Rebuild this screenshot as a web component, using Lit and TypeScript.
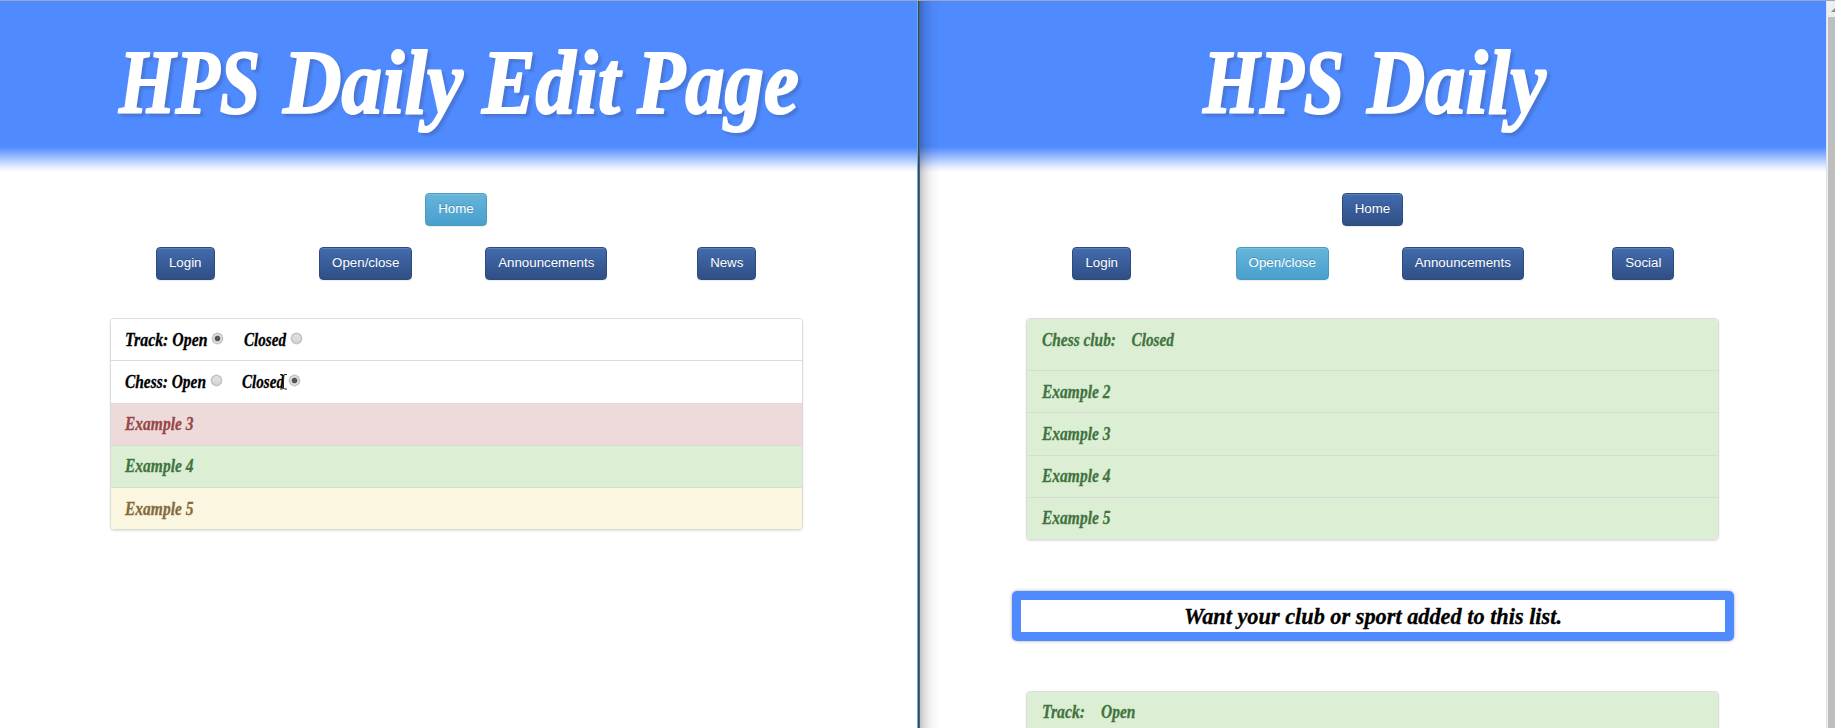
import { LitElement, html, svg, css } from "lit";
import { customElement, property } from "lit/decorators.js";

type Word = [text: string, x: number, width: number];

/** Display lettering: each word is fitted to its own measure. */
@customElement("script-text")
class ScriptText extends LitElement {
  @property({ attribute: false }) words: Word[] = [];
  @property({ type: Number }) size = 20;
  @property({ type: Number }) width = 0;
  @property({ type: Number }) height = 20;
  @property({ type: Number }) base = 15;
  @property({ type: Number }) weight = 0.3;
  static styles = css`
    :host { display: inline-block; vertical-align: top; line-height: 0; }
    svg { overflow: visible; display: block; }
    text { font-family: "Liberation Serif", "Times New Roman", serif; font-weight: 700; font-style: italic; fill: currentColor; stroke: currentColor; stroke-linejoin: round; }
  `;
  render() {
    return html`<svg width=${this.width} height=${this.height}>
      <text y=${this.base} font-size=${this.size} stroke-width=${this.weight}>${this.words.map(
        ([t, x, w]) => svg`<tspan x=${x} textLength=${w} lengthAdjust="spacingAndGlyphs">${t}</tspan>`
      )}</text></svg>`;
  }
}

const label = (words: Word[]) => html`<script-text .words=${words} width="200" height="20" base="14.6" size="18.5"></script-text>`;

interface Row { words: Word[]; tone: string; tall?: boolean; radios?: [boolean, boolean]; second?: Word[]; shift?: boolean; }
const example = (n: number): Word[] => [[`Example ${n}`, 0, 68.5]];

@customElement("site-header")
class SiteHeader extends LitElement {
  @property({ attribute: false }) words: Word[] = [];
  @property({ type: Number }) width = 0;
  static styles = css`
    :host { display: flex; justify-content: center; height: 171px; box-sizing: border-box; padding-top: 33px; color: #fff;
      background: linear-gradient(#4f8aff 0 145px, #6093ff 148px, #84adff 153px, #b0caff 159px, #dfe9ff 165px, #fff 171px); }
    script-text { filter: drop-shadow(3px 3px 1px rgba(60, 80, 130, .32)); }
  `;
  render() {
    return html`<script-text .words=${this.words} width=${this.width} height="100" base="78.5" size="90" weight="2"></script-text>`;
  }
}

@customElement("site-nav")
class SiteNav extends LitElement {
  @property({ attribute: false }) items: string[] = [];
  @property() active = "";
  static styles = css`
    :host { display: block; padding: 20.5px 0 0 95px; }
    .home { display: flex; justify-content: center; margin-bottom: 21px; width: 722px; }
    .links { display: grid; grid-template-columns: repeat(4, 180.5px); justify-items: center; width: 722px; }
    button { height: 33px; box-sizing: border-box; padding: 0 12px; border: 1px solid #2f4b7c; border-radius: 4px;
      font: 13.3px/20px "Liberation Sans", Arial, sans-serif; color: #fff; text-shadow: 0 -1px 0 rgba(0,0,0,.2);
      background: linear-gradient(#426bae, #304f84); box-shadow: inset 0 1px 0 rgba(255,255,255,.15), 0 1px 1px rgba(0,0,0,.075); }
    .on { border-color: #489abf; background: linear-gradient(#66b5da, #489fce); }
  `;
  btn(t: string) { return html`<button class=${t === this.active ? "on" : ""}>${t}</button>`; }
  render() {
    return html`<div class="home">${this.btn("Home")}</div><div class="links">${this.items.map((t) => this.btn(t))}</div>`;
  }
}

@customElement("club-list")
class ClubList extends LitElement {
  @property({ attribute: false }) rows: Row[] = [];
  static styles = css`
    :host { display: block; width: 693px; box-sizing: border-box; border: 1px solid #dcdcdc; border-radius: 4px; box-shadow: 0 1px 2px rgba(0,0,0,.12); overflow: hidden; }
    .row { display: flex; height: 42.3px; box-sizing: border-box; padding: 11.5px 14.5px 0; border-bottom: 1px solid #d9dbd7; color: #000; background: #fff; }
    .row:last-child { border-bottom: 0; height: 41px; }
    .row.tall { height: 52px; }
    .red { background: #eedada; color: #964747; }
    .green { background: #dcefd4; color: #42733f; }
    .yellow { background: #faf6df; color: #846a3d; }
    .slot { display: flex; width: 118.5px; }
    .slot.b { width: 117px; }
    .group { display: flex; }
    .radio { width: 11px; height: 11px; box-sizing: border-box; margin-top: 2px; border-radius: 50%; border: 1px solid #b3b3b3; background: linear-gradient(#e2e2e2, #d5d5d5); box-shadow: 0 0 0 .4px #c8c8c8; }
    .radio.on { background: radial-gradient(circle, #555 0 2.4px, #e3e3e3 3.3px); }
  `;
  radio(on: boolean) { return html`<span class="radio ${on ? "on" : ""}" role="radio" aria-checked=${on}></span>`; }
  render() {
    return this.rows.map((r) => html`<div class="row ${r.tone} ${r.tall ? "tall" : ""}">${r.radios
      ? html`<div class="slot ${r.shift ? "b" : ""}"><script-text .words=${r.words} width=${r.shift ? 86 : 87} base="14.6" size="18.5"></script-text>${this.radio(r.radios[0])}</div>
        <div class="group"><script-text .words=${r.second!} width="47" base="14.6" size="18.5"></script-text>${this.radio(r.radios[1])}</div>`
      : label(r.words)}</div>`);
  }
}

@customElement("app-root")
class AppRoot extends LitElement {
  static styles = css`
    :host { display: flex; position: relative; width: 1835px; height: 728px; box-sizing: border-box; overflow: hidden; background: #fff; border-top: 1px solid #9ba5bd; }
    .pane { height: 727px; overflow: hidden; position: relative; }
    .left { width: 917px; }
    .edge { width: 3px; height: 727px; flex: none; background: linear-gradient(90deg, #62b0dc 0 1px, #29466c 1px 2px, #56626f 2px 3px); }
    .right { width: 906px; }
    .right::after { content: ""; position: absolute; left: 0; top: 0; width: 20px; height: 727px; background: linear-gradient(90deg, rgba(0,0,0,.24), rgba(0,0,0,.12) 5px, rgba(0,0,0,.04) 12px, transparent); }
    .left club-list { margin: 38.5px 0 0 109.5px; }
    .right site-nav { padding-left: 91.5px; }
    .right club-list { margin: 38.5px 0 0 106.4px; }
    .notice { width: 722px; height: 50px; box-sizing: border-box; margin: 51px 0 0 92px; border: 9.5px solid #4f8aff; border-radius: 5px; display: flex; justify-content: center; box-shadow: 0 0 3px rgba(60,60,60,.5); color: #000; }
    .right .notice + club-list { margin-top: 50px; }
    .notice script-text { padding: 3px 0 0 1px; }
    .scroll { width: 9px; flex: none; height: 727px; box-sizing: border-box; background: #eee; border-left: 1px solid #dde3ee; padding: 16px 0 0 1px; position: relative; overflow: hidden; }
    .thumb { height: 711px; background: #bebebe; }
    .arrow { position: absolute; left: 4px; top: 7px; width: 8px; height: 4px; fill: #8c8c8c; }
    .cursor { position: absolute; left: 279px; top: 372px; width: 9px; height: 17px; }
  `;
  render() {
    const edit: Row[] = [
      { words: [["Track: Open", 0, 82.5]], second: [["Closed", 0, 42]], radios: [true, false], tone: "" },
      { words: [["Chess: Open", 0, 81]], second: [["Closed", 0, 42]], radios: [false, true], tone: "", shift: true },
      { words: example(3), tone: "red" }, { words: example(4), tone: "green" }, { words: example(5), tone: "yellow" },
    ];
    const clubs: Row[] = [
      { words: [["Chess club:", 0, 74], ["Closed", 89.5, 42.5]], tone: "green", tall: true },
      ...[2, 3, 4, 5].map((n) => ({ words: example(n), tone: "green" })),
    ];
    return html`
      <main class="pane left">
        <site-header width="681" .words=${[["HPS", 1, 141], ["Daily", 165, 180], ["Edit", 364, 138], ["Page", 519, 162]]}></site-header>
        <site-nav active="Home" .items=${["Login", "Open/close", "Announcements", "News"]}></site-nav>
        <club-list .rows=${edit}></club-list>
        <svg class="cursor" viewBox="0 0 9 17"><path d="M1 1.5H3.5L4.5 2.5 5.5 1.5H8M4.5 2.5V15M1 16H3.5L4.5 15 5.5 16H8" fill="none" stroke="#222" stroke-width="1"/></svg>
      </main>
      <div class="edge"></div>
      <main class="pane right">
        <site-header width="343" .words=${[["HPS", 1, 141], ["Daily", 165, 179]]}></site-header>
        <site-nav active="Open/close" .items=${["Login", "Open/close", "Announcements", "Social"]}></site-nav>
        <club-list .rows=${clubs}></club-list>
        <div class="notice"><script-text width="380" base="20.5" size="24" .words=${[["Want your club or sport added to this list.", 0, 378]]}></script-text></div>
        <club-list .rows=${[{ words: [["Track:", 0, 43], ["Open", 59, 34.5]], tone: "green", tall: true }]}></club-list>
      </main>
      <div class="scroll"><svg class="arrow" viewBox="0 0 8 4"><path d="M0 4L4 0L8 4Z"/></svg><div class="thumb"></div></div>`;
  }
}
